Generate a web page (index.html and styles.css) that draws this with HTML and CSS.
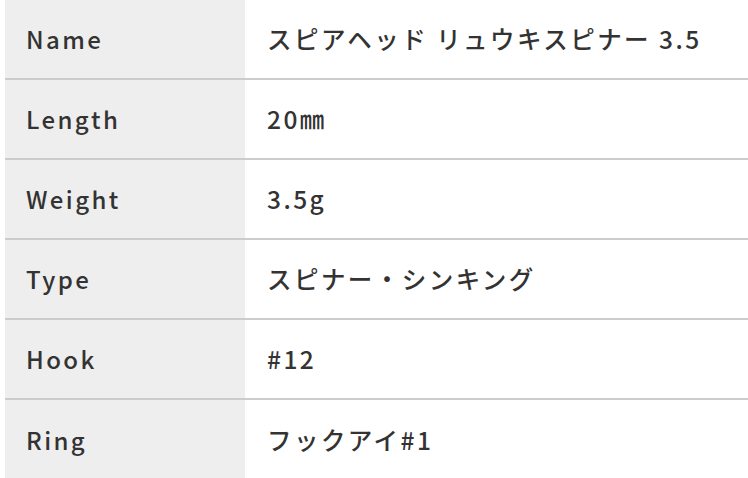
FILE: index.html
```html
<!DOCTYPE html>
<html lang="ja">
<head>
<meta charset="utf-8">
<link rel="stylesheet" href="styles.css">
</head>
<body>
<div class="spec">
  <div class="row"><div class="label">Name</div><div class="value">スピアヘッド リュウキスピナー 3.5</div></div>
  <div class="row"><div class="label">Length</div><div class="value">20㎜</div></div>
  <div class="row"><div class="label">Weight</div><div class="value">3.5g</div></div>
  <div class="row"><div class="label">Type</div><div class="value">スピナー・シンキング</div></div>
  <div class="row"><div class="label">Hook</div><div class="value">#12</div></div>
  <div class="row"><div class="label">Ring</div><div class="value">フックアイ#1</div></div>
</div>
</body>
</html>
```
FILE: styles.css
```css
html, body {
  margin: 0;
  padding: 0;
  background: #ffffff;
}
body {
  font-family: "Noto Sans CJK JP", "Noto Sans", sans-serif;
  color: #333333;
  overflow: hidden;
}
.spec {
  margin-left: 5px;
  width: 760px;
  font-size: 24px;
  font-weight: 500;
  letter-spacing: 0.1em;
  line-height: 1.5;
}
.row {
  display: grid;
  grid-template-columns: 240px 1fr;
  height: 80px;
  box-sizing: border-box;
  border-bottom: 2px solid #cccccc;
}
.row:last-child {
  border-bottom: none;
}
.label,
.value {
  display: flex;
  align-items: center;
  padding-left: 21px;
}
.label {
  background: #eeeeee;
}
.value {
  padding-left: 22px;
  font-size: 24.5px;
  letter-spacing: 0.1em;
}
```
